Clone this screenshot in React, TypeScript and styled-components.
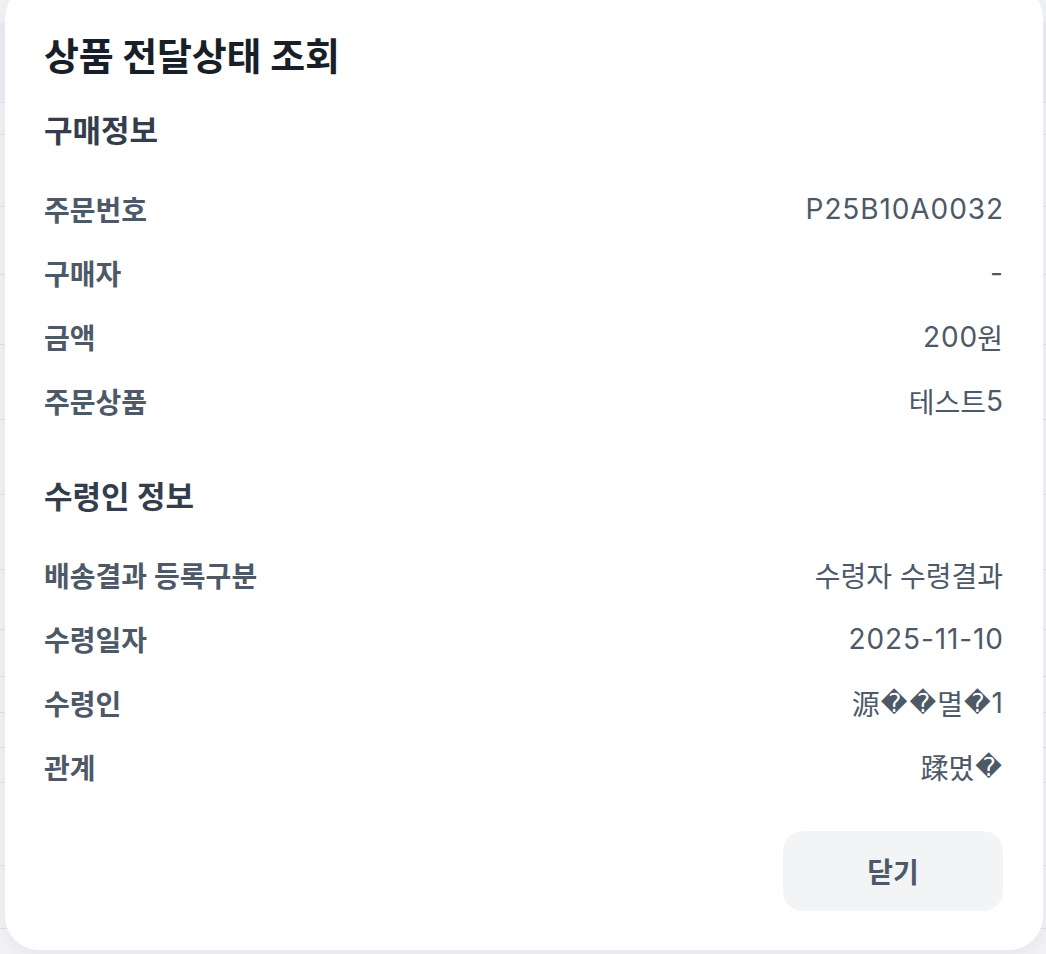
import React from "react";
import styled, { createGlobalStyle } from "styled-components";

const GlobalStyle = createGlobalStyle`
  html, body {
    margin: 0;
    padding: 0;
    background: #f2f4f6;
    font-family: Inter, "Noto Sans CJK KR", "Noto Sans", sans-serif;
  }
  * { box-sizing: border-box; }
`;

type Row = { label: string; value: string };

const purchase: Row[] = [
  { label: "주문번호", value: "P25B10A0032" },
  { label: "구매자", value: "-" },
  { label: "금액", value: "200원" },
  { label: "주문상품", value: "테스트5" },
];

const R = "\uFFFD";
const receiver: Row[] = [
  { label: "배송결과 등록구분", value: "수령자 수령결과" },
  { label: "수령일자", value: "2025-11-10" },
  { label: "수령인", value: `源${R}${R}멸${R}1` },
  { label: "관계", value: `蹂몄${R}` },
];

// rows of the list page sitting behind the dialog
const bgRows = [32, 72, 68, 70, 75, 75, 75, 60, 47, 36, 35, 35, 83, 63, 40];

const Screen = styled.div`
  position: relative;
  width: 1046px;
  height: 954px;
  overflow: hidden;
`;

const BackPage = styled.div`
  display: flex;
  flex-direction: column;
  padding-top: 23px;
`;

const BackHead = styled.div`
  height: 80px;
  background: #e9ecf0;
  border-bottom: 1px solid #d9dde3;
`;

const BackRow = styled.div<{ $h: number }>`
  height: ${(p) => p.$h}px;
  background: #f4f5f7;
  border-bottom: 1px solid #d5d9df;
`;

const Overlay = styled.div`
  position: absolute;
  inset: 0;
  display: flex;
  justify-content: center;
  align-items: flex-start;
  background: rgba(240, 242, 245, 0.35);
`;

const Dialog = styled.div`
  width: 1038px;
  height: 966px;
  margin-top: -16px;
  margin-left: 2px;
  background: #ffffff;
  border-radius: 34px;
  box-shadow: 0 6px 24px rgba(0, 0, 0, 0.06);
  padding: 48px 40px 39px 39px;
  display: flex;
  flex-direction: column;
`;

const Title = styled.h1`
  margin: 0;
  font-size: 38px;
  line-height: 48px;
  font-weight: 700;
  color: #191f28;
  letter-spacing: -0.2px;
`;

const Section = styled.section<{ $gap: number }>`
  margin-top: ${(p) => p.$gap}px;
  display: flex;
  flex-direction: column;
`;

const SectionTitle = styled.h2`
  margin: 0 0 26px;
  font-size: 31px;
  line-height: 40px;
  font-weight: 700;
  color: #333d4b;
`;

const List = styled.dl`
  margin: 0;
  display: flex;
  flex-direction: column;
`;

const Item = styled.div`
  height: 64px;
  display: flex;
  align-items: center;
  justify-content: space-between;
`;

const Label = styled.dt`
  font-size: 28px;
  font-weight: 600;
  color: #4e5968;
`;

const Value = styled.dd`
  margin: 0;
  font-size: 28px;
  font-weight: 400;
  color: #4e5968;
  text-align: right;
  display: flex;
  align-items: center;
`;

const Latin = styled.span`
  letter-spacing: 0.9px;
  margin-right: -0.9px;
`;

const Missing = styled.span`
  font-family: "DejaVu Sans", sans-serif;
  font-size: 26px;
  line-height: 1;
  margin: 0 1px;
`;

const Footer = styled.div`
  margin-top: auto;
  display: flex;
  justify-content: flex-end;
`;

const CloseButton = styled.button`
  width: 220px;
  height: 80px;
  border: none;
  border-radius: 20px;
  background: #f2f4f6;
  color: #4e5968;
  font-family: inherit;
  font-size: 28px;
  font-weight: 700;
  cursor: pointer;
`;

const ValueText = ({ text }: { text: string }) => (
  <Value>
    {text.split(/([A-Za-z0-9-]+|\uFFFD)/).map((part, i) => {
      if (!part) return null;
      if (part === R) return <Missing key={i}>{part}</Missing>;
      if (/^[A-Za-z0-9-]+$/.test(part)) return <Latin key={i}>{part}</Latin>;
      return <span key={i}>{part}</span>;
    })}
  </Value>
);

const InfoList = ({ rows }: { rows: Row[] }) => (
  <List>
    {rows.map((r) => (
      <Item key={r.label}>
        <Label>{r.label}</Label>
        <ValueText text={r.value} />
      </Item>
    ))}
  </List>
);

export default function App() {
  return (
    <>
      <GlobalStyle />
      <Screen>
        <BackPage>
          <BackHead />
          {bgRows.map((h, i) => (
            <BackRow key={i} $h={h} />
          ))}
        </BackPage>
        <Overlay>
          <Dialog role="dialog" aria-modal="true">
            <Title>상품 전달상태 조회</Title>
            <Section $gap={31}>
              <SectionTitle>구매정보</SectionTitle>
              <InfoList rows={purchase} />
            </Section>
            <Section $gap={44}>
              <SectionTitle>수령인 정보</SectionTitle>
              <InfoList rows={receiver} />
            </Section>
            <Footer>
              <CloseButton type="button">닫기</CloseButton>
            </Footer>
          </Dialog>
        </Overlay>
      </Screen>
    </>
  );
}
